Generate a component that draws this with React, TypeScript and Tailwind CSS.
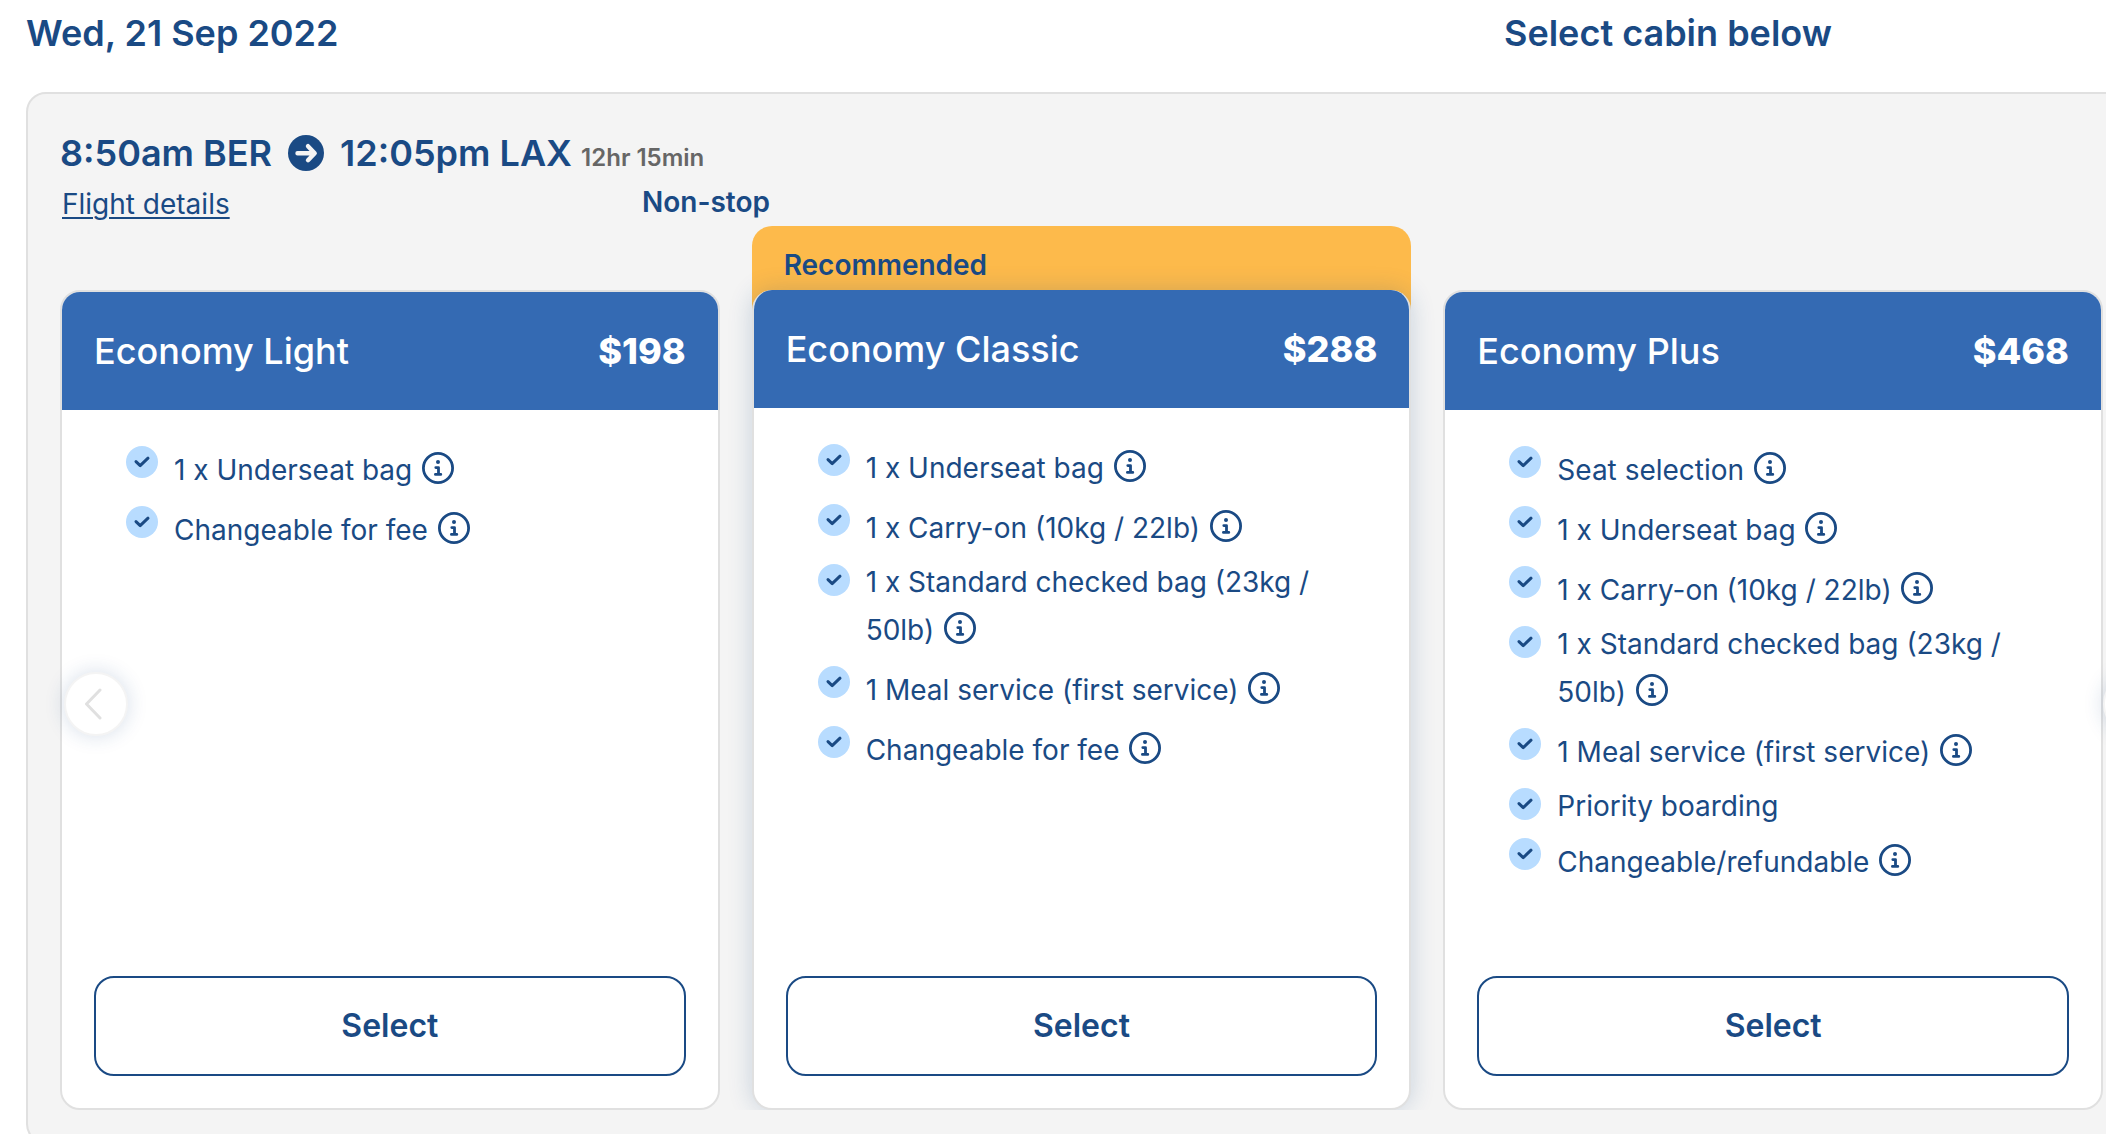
import { type ReactNode } from "react";

type Feature = { label: string; info?: boolean };

type Fare = {
  name: string;
  price: string;
  recommended?: boolean;
  features: Feature[];
};

const fares: Fare[] = [
  {
    name: "Economy Light",
    price: "$198",
    features: [
      { label: "1 x Underseat bag", info: true },
      { label: "Changeable for fee", info: true },
    ],
  },
  {
    name: "Economy Classic",
    price: "$288",
    recommended: true,
    features: [
      { label: "1 x Underseat bag", info: true },
      { label: "1 x Carry-on (10kg / 22lb)", info: true },
      { label: "1 x Standard checked bag (23kg / 50lb)", info: true },
      { label: "1 Meal service (first service)", info: true },
      { label: "Changeable for fee", info: true },
    ],
  },
  {
    name: "Economy Plus",
    price: "$468",
    features: [
      { label: "Seat selection", info: true },
      { label: "1 x Underseat bag", info: true },
      { label: "1 x Carry-on (10kg / 22lb)", info: true },
      { label: "1 x Standard checked bag (23kg / 50lb)", info: true },
      { label: "1 Meal service (first service)", info: true },
      { label: "Priority boarding" },
      { label: "Changeable/refundable", info: true },
    ],
  },
];

function ArrowCircle() {
  return (
    <svg viewBox="0 0 36 36" className="h-9 w-9" aria-hidden="true">
      <circle cx="18" cy="18" r="18" fill="#1a4a84" />
      <path
        d="M9.5 18.2H26M20 11.2l6.7 7-6.7 7"
        fill="none"
        stroke="#f4f4f4"
        strokeWidth="4.4"
        strokeLinecap="round"
        strokeLinejoin="round"
      />
    </svg>
  );
}

function CheckCircle() {
  return (
    <svg viewBox="0 0 32 32" className="mt-[3px] h-8 w-8 shrink-0" aria-hidden="true">
      <circle cx="16" cy="16" r="16" fill="#b8dcff" />
      <path
        d="M10 15.6l4.2 4L22 12.2"
        fill="none"
        stroke="#1a4a84"
        strokeWidth="3"
        strokeLinecap="round"
        strokeLinejoin="round"
      />
    </svg>
  );
}

function InfoIcon() {
  return (
    <svg viewBox="0 0 32 32" className="h-8 w-8" aria-hidden="true">
      <circle cx="16" cy="16" r="14.6" fill="none" stroke="#1a4a84" strokeWidth="2.8" />
      <circle cx="16" cy="10" r="2" fill="#1a4a84" />
      <path
        d="M13.8 15.6h2.7v6.8M13.4 22.4h5.4"
        fill="none"
        stroke="#1a4a84"
        strokeWidth="2.8"
        strokeLinecap="round"
        strokeLinejoin="round"
      />
    </svg>
  );
}

function NavButton({ label, className, children }: { label: string; className: string; children: ReactNode }) {
  return (
    <button
      type="button"
      aria-label={label}
      className={`absolute top-1/2 z-20 flex h-16 w-16 -translate-y-7 items-center justify-center rounded-full border-2 border-[#f4f4f4] bg-white shadow-[0_0_20px_rgba(26,74,132,0.18)] ${className}`}
    >
      {children}
    </button>
  );
}

function FareCard({ fare }: { fare: Fare }) {
  return (
    <div className={fare.recommended ? "relative flex [clip-path:inset(-64px_-32px_0_-32px)]" : "relative flex"}>
      {fare.recommended && (
        <div className="absolute inset-x-0 -top-16 h-21 rounded-t-[20px] bg-[#fdba4b] px-8 pt-4.5 text-[28px] leading-[42px] font-semibold">
          Recommended
        </div>
      )}
      <article
        className={`relative flex flex-1 flex-col overflow-hidden rounded-[20px] border-2 border-[#e0e0e0] bg-white ${
          fare.recommended ? "border-t-0 shadow-[0_0_24px_rgba(26,74,132,0.2)]" : ""
        }`}
      >
        <header className="flex h-[118px] items-center justify-between bg-[#346ab3] px-8 text-4xl text-white">
          <h3 className="font-medium">{fare.name}</h3>
          <span className="font-extrabold">{fare.price}</span>
        </header>
        <ul className="flex-1 px-16 pt-[33px]">
          {fare.features.map((feature) => (
            <li key={feature.label} className="mb-2 flex items-start gap-4 text-[28px] leading-[42px]">
              <CheckCircle />
              <span>
                {feature.label}{" "}
                {feature.info && (
                  <button type="button" aria-label={`About ${feature.label}`} className="ml-0.5 pt-[9px] pb-[11px] align-[-4px]">
                    <InfoIcon />
                  </button>
                )}
              </span>
            </li>
          ))}
        </ul>
        <div className="p-8">
          <button type="button" className="h-[100px] w-full rounded-[20px] border-2 border-[#1a4a84] text-[32px] font-semibold">
            Select
          </button>
        </div>
      </article>
    </div>
  );
}

export default function App() {
  return (
    <main className="h-screen overflow-hidden bg-white font-['Inter',sans-serif] text-[#1a4a84]">
      <div className="grid h-23 grid-cols-[1504px_1fr] text-4xl leading-[66px] font-semibold">
        <h1 className="pl-[26px]">Wed, 21 Sep 2022</h1>
        <h2>Select cabin below</h2>
      </div>
      <section className="-mr-[31px] ml-[26px] rounded-[20px] border-2 border-[#e0e0e0] bg-[#f4f4f4] px-8 pb-8">
        <div className="flex h-49 flex-col pt-8">
          <div className="flex items-center text-4xl leading-[54px] font-semibold">
            <span>8:50am BER</span>
            <span className="mx-4">
              <ArrowCircle />
            </span>
            <span>
              12:05pm LAX <span className="text-2xl text-[#666666]">12hr 15min</span>
            </span>
          </div>
          <div className="mt-px flex w-[710px] items-start justify-between text-[28px] leading-[42px]">
            <a href="#details" className="p-0.5 underline decoration-2 underline-offset-[3px]">
              Flight details
            </a>
            <span className="font-semibold">Non-stop</span>
          </div>
        </div>
        <div className="relative grid h-[820px] grid-cols-3 gap-8">
          {fares.map((fare) => (
            <FareCard key={fare.name} fare={fare} />
          ))}
          <NavButton label="Previous fares" className="left-1">
            <svg
              viewBox="0 0 32 32"
              className="h-8 w-8"
              fill="none"
              stroke="#e0e0e0"
              strokeWidth="3"
              strokeLinecap="round"
              strokeLinejoin="round"
              aria-hidden="true"
            >
              <path d="M20 2L6.5 16 20 30" />
            </svg>
          </NavButton>
          <NavButton label="Next fares" className="left-full">
            <svg
              viewBox="0 0 32 32"
              className="h-8 w-8"
              fill="none"
              stroke="#1a4a84"
              strokeWidth="3"
              strokeLinecap="round"
              strokeLinejoin="round"
              aria-hidden="true"
            >
              <path d="M12 2l13.5 14L12 30" />
            </svg>
          </NavButton>
        </div>
      </section>
    </main>
  );
}
